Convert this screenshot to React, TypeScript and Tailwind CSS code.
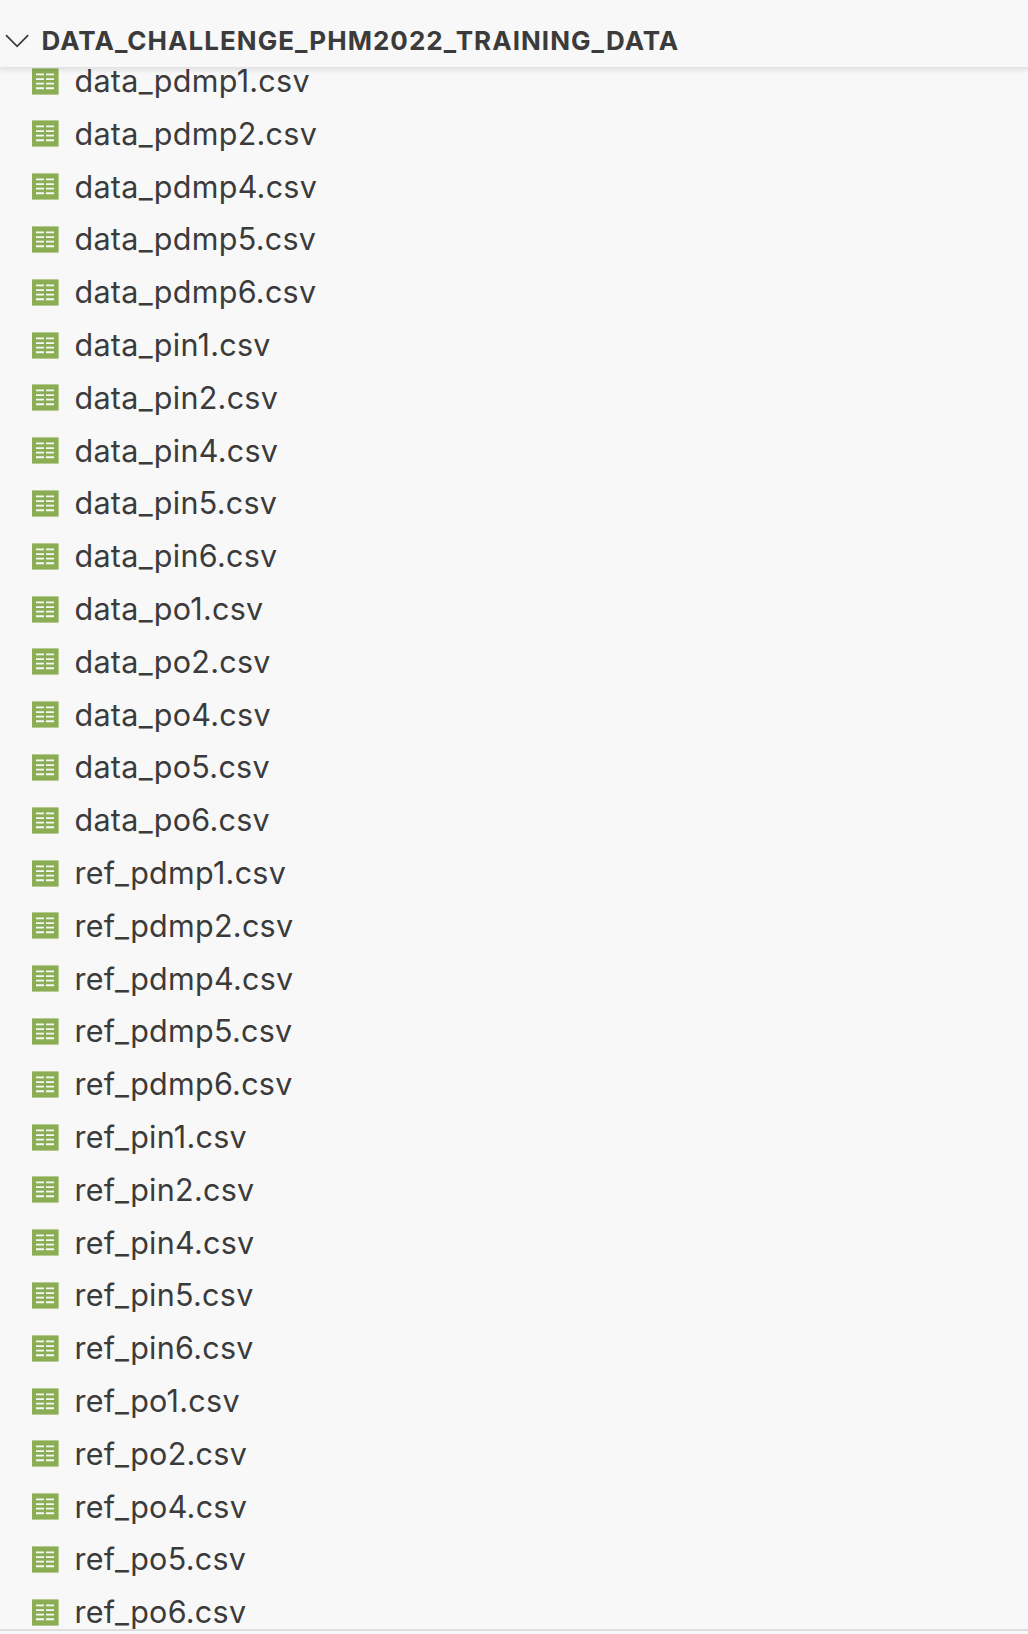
const groups = ["data", "ref"];
const sensors = ["pdmp", "pin", "po"];
const channels = [1, 2, 4, 5, 6];
const files = groups.flatMap((g) =>
  sensors.flatMap((s) => channels.map((c) => `${g}_${s}${c}.csv`)),
);

function TableIcon() {
  return (
    <svg className="h-[27px] w-[27px] shrink-0" viewBox="0 0 27 27" aria-hidden="true">
      <rect x="0" y="0.4" width="26.6" height="26.2" fill="#8bae54" />
      <path
        d="M4 6.4h8M14 6.4h8M4 11.1h8M14 11.1h8M4 15.6h8M14 15.6h8M4 20.2h8M14 20.2h8"
        stroke="#f8f8f8"
        strokeWidth="1.9"
      />
    </svg>
  );
}

export default function App() {
  return (
    <div className="flex h-[1634px] w-[1028px] flex-col overflow-hidden bg-[#f8f8f8] font-['Inter',sans-serif] text-[#3b3b3b]">
      <header className="z-10 flex h-[67px] shrink-0 items-center bg-[#f8f8f8] pt-[14px] pl-[5px] shadow-[0_2px_5px_1px_rgba(0,0,0,0.1)]">
        <svg className="h-[14px] w-[24px] shrink-0" viewBox="0 0 24 14" fill="none" aria-hidden="true">
          <path d="M1 1.2L12.1 12.3L23.2 1.2" stroke="#3b3b3b" strokeWidth="1.8" />
        </svg>
        <h1 className="ml-[12.5px] text-[26px] leading-[32px] font-bold tracking-[1.04px] whitespace-nowrap">
          DATA_CHALLENGE_PHM2022_TRAINING_DATA
        </h1>
      </header>
      <main className="min-h-0 flex-1 border-b-2 border-[#dedede]">
        <ul className="-mt-[12.3px]">
          {files.map((name) => (
            <li key={name} className="flex h-[52.8px] items-center pl-[32px]">
              <TableIcon />
              <span className="ml-[15.5px] text-[30.5px] leading-[26px] tracking-[0.27px] whitespace-nowrap">
                {name}
              </span>
            </li>
          ))}
        </ul>
      </main>
      <div className="h-[3px] shrink-0" />
    </div>
  );
}
